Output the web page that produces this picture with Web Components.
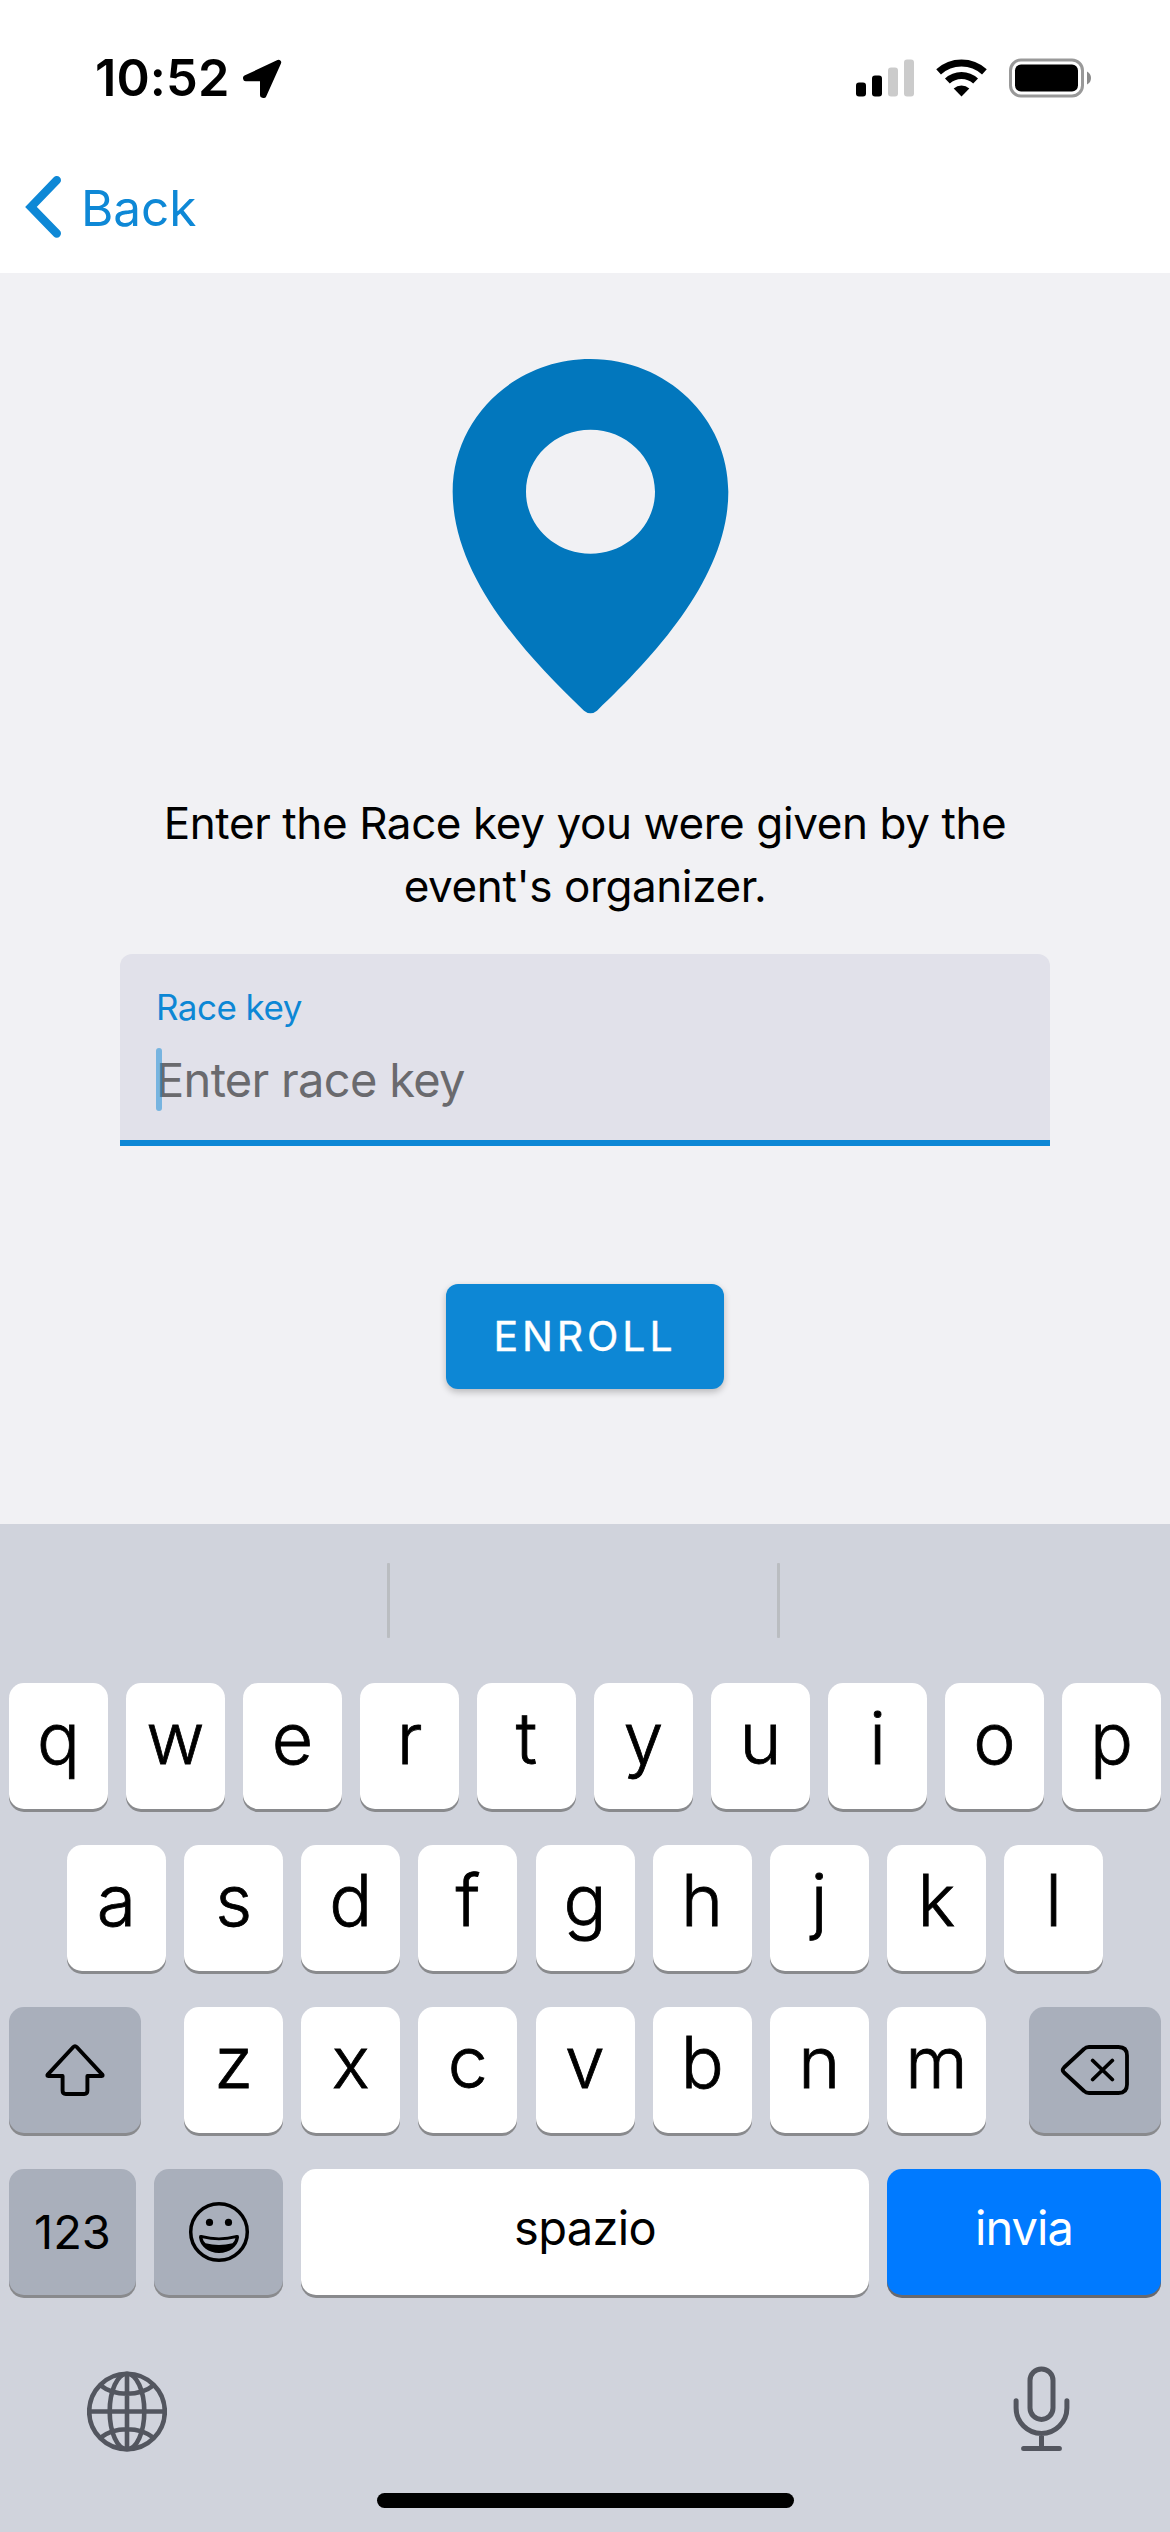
<!DOCTYPE html>
<html lang="it">
<head>
<meta charset="utf-8">
<title>Enroll</title>
<style>
  html, body { margin: 0; padding: 0; background: #f1f1f4; }
  body { font-family: Inter, "Liberation Sans", sans-serif; color: #000; }
</style>
</head>
<body>
<enroll-screen></enroll-screen>
<script>
const define = (name, html) => {
  const template = document.createElement('template');
  template.innerHTML = html;
  customElements.define(name, class extends HTMLElement {
    constructor() {
      super();
      this.attachShadow({ mode: 'open' }).append(template.content.cloneNode(true));
    }
  });
};

define('status-bar', `
<style>
  :host { display: flex; justify-content: space-between; align-items: center; height: 131px; padding: 12px 79px 0 95px; box-sizing: content-box; }
  .left, .right { display: flex; align-items: center; }
  .time { font-size: 50.5px; font-weight: 600; letter-spacing: .1px; line-height: 60px; }
  svg { display: block; }
  .loc { margin-left: 12px; margin-top: 2px; }
  .wifi { margin-left: 22px; }
  .bat { margin-left: 22px; }
</style>
<div class="left">
  <span class="time">10:52</span>
  <svg class="loc" width="40" height="40" viewBox="0 0 40 40"><path d="M3.600 18.900 36.600 3.400 21.800 36.400 20.600 36.200V19.700L3.700 19.600Z" stroke="#000" stroke-width="5.200" stroke-linejoin="round"/></svg>
</div>
<div class="right">
  <svg width="58" height="38" viewBox="0 0 58 38"><g><rect y="23.5" width="10" height="14" rx="3"/><rect x="16" y="16.5" width="10" height="21" rx="3"/></g><g fill="#cbcbcb"><rect x="32" y="8.5" width="10" height="29" rx="3"/><rect x="48" y=".5" width="10" height="37" rx="3"/></g></svg>
  <svg class="wifi" width="51" height="38" viewBox="0 0 51 38">
    <g stroke="#000" fill="none"><path d="M2.6 12.8A34 34 0 0 1 48.4 12.8" stroke-width="7"/><path d="M11.4 22A20.5 20.5 0 0 1 39.6 22" stroke-width="7"/></g>
    <path d="M25.5 37.5 17.7 29.6A11.5 11.5 0 0 1 33.3 29.6Z"/>
  </svg>
  <svg class="bat" width="82" height="40" viewBox="0 0 82 40"><rect x="1.5" y="2" width="72" height="36" rx="10.5" fill="none" stroke="#999" stroke-width="3"/><rect x="6" y="6.5" width="63" height="27" rx="6"/><path d="M78 13.5Q82 15.5 82 20T78 26.5Z" fill="#8a8a8a"/></svg>
</div>`);

define('nav-bar', `
<style>
  :host { display: flex; align-items: center; height: 130px; padding-left: 24px; color: #0e88d6; }
  svg { display: block; margin-right: 19px; }
  span { font-size: 49.5px; line-height: 60px; letter-spacing: -.1px; }
</style>
<svg width="38" height="64" viewBox="0 0 38 64"><path d="M32.800 4.200 7 30.900 32.800 57.500" fill="none" stroke="currentColor" stroke-width="8.400" stroke-linecap="round" stroke-linejoin="miter"/></svg>
<span><slot></slot></span>`);

define('place-pin', `
<style>:host { display: block; width: 320px; height: 390px; } svg { display: block; }</style>
<svg width="320" height="390" viewBox="0 0 960 1170"><path fill="#0277bd" fill-rule="evenodd" d="M481.500 57C253 57 68 235 68 455C68 700 270 930 462 1112Q481.500 1128 501 1112C693 930 895 700 895 455C895 235 710 57 481.500 57ZM481.500 269C588 269 675 352 675 455S588 641 481.500 641 288 558 288 455 375 269 481.500 269Z"/></svg>`);

define('text-field', `
<style>
  :host { display: flex; flex-direction: column; box-sizing: border-box; width: 930px; height: 192px; padding: 33px 36px 0; background: #e1e1ea; border-bottom: 6px solid #0d87d5; border-radius: 12px 12px 0 0; }
  .label { font-size: 35px; line-height: 40px; letter-spacing: -.53px; color: #0d87d5; }
  .line { position: relative; display: flex; align-items: center; height: 64px; margin-top: 21px; }
  .hint { font-size: 47px; line-height: 64px; letter-spacing: -.69px; color: #6a6a6e; }
  .caret { position: absolute; left: 0; top: 0; width: 6px; height: 63px; border-radius: 3px; background: #0d87d5; opacity: .5; }
</style>
<span class="label"><slot name="label"></slot></span>
<div class="line"><span class="hint"><slot></slot></span><span class="caret"></span></div>`);

define('raised-button', `
<style>
  :host { display: flex; align-items: center; justify-content: center; width: 278px; height: 105px; border-radius: 12px; background: #0d87d5; color: #fff; box-shadow: 0 3px 7px rgba(0,0,0,.24); }
  span { font-size: 41px; font-weight: 400; -webkit-text-stroke: .4px currentColor; line-height: 50px; letter-spacing: 3.9px; margin-top: -1px; }
</style>
<span><slot></slot></span>`);

define('key-cap', `
<style>
  :host { display: flex; align-items: center; justify-content: center; box-sizing: border-box; width: 99px; height: 126px; padding-bottom: 17px; border-radius: 15px; background: #fff; box-shadow: 0 3px 0 #898a8d; font-size: 71.5px; font-weight: 300; -webkit-text-stroke: .8px currentColor; }
  :host([kind]) { font-size: 47px; font-weight: 400; -webkit-text-stroke: 0; }
  :host([kind="fn"]) { background: #a9afbb; padding-bottom: 0; }
  :host([kind="space"]) { width: 568px; letter-spacing: -.68px; padding-bottom: 9px; }
  :host([kind="go"]) { width: 274px; letter-spacing: -.95px; background: #007aff; color: #fff; padding-bottom: 9px; box-shadow: 0 3px 0 #68696e; }
</style>
<slot></slot>`);

define('suggestion-bar', `
<style>
  :host { display: flex; justify-content: center; gap: 387px; height: 75px; padding: 39px 3px 45px 0; }
  i { width: 3px; height: 75px; border-radius: 1px; background: #babdc1; }
</style><i></i><i></i>`);

define('soft-keyboard', `
<style>
  :host { display: flex; flex-direction: column; height: 1008px; background: #d0d3dc; }
  .rows { display: flex; flex-direction: column; gap: 36px; padding: 0 9px; }
  .row { display: flex; justify-content: center; gap: 18px; }
  .row.home-row { justify-content: space-between; padding: 0 58px; }
  .row.split { justify-content: space-between; }
  .mid { display: flex; gap: 18.170px; }
  .wide { width: 132px; } .num { width: 127px; padding-bottom: 1px; } .emoji { width: 129px; }
  svg { display: block; }
  .tools { display: flex; justify-content: space-between; align-items: flex-start; padding: 71px 100px 0 87px; color: #53565f; }
  .tools svg:first-child { margin-top: 5px; }
  .home { width: 417px; height: 15px; border-radius: 7.500px; background: #000; margin: auto auto 24px; }
</style>
<suggestion-bar></suggestion-bar>
<div class="rows">
  <div class="row"><key-cap>q</key-cap><key-cap>w</key-cap><key-cap>e</key-cap><key-cap>r</key-cap><key-cap>t</key-cap><key-cap>y</key-cap><key-cap>u</key-cap><key-cap>i</key-cap><key-cap>o</key-cap><key-cap>p</key-cap></div>
  <div class="row home-row"><key-cap>a</key-cap><key-cap>s</key-cap><key-cap>d</key-cap><key-cap>f</key-cap><key-cap>g</key-cap><key-cap>h</key-cap><key-cap>j</key-cap><key-cap>k</key-cap><key-cap>l</key-cap></div>
  <div class="row split">
    <key-cap kind="fn" class="wide"><svg width="60" height="54" viewBox="45.600 63 60 54"><path d="M73.900 67 48.500 94.300Q47.200 96 49 96H63.200V110.800Q63.200 114 66.400 114H84.800Q88 114 88 110.800V96H102.200Q104 96 102.700 94.300L77.300 67Q75.600 65.200 73.900 67Z" fill="none" stroke="#000" stroke-width="3.900" stroke-linejoin="round"/></svg></key-cap>
    <div class="mid"><key-cap>z</key-cap><key-cap>x</key-cap><key-cap>c</key-cap><key-cap>v</key-cap><key-cap>b</key-cap><key-cap>n</key-cap><key-cap>m</key-cap></div>
    <key-cap kind="fn" class="wide"><svg width="70" height="52" viewBox="479 64 70 52"><path d="M508 67H537.500Q546 67 546 75.500V104.500Q546 113 537.500 113H508Q505 113 503 111L483 92.500Q480.500 90 483 87.500L503 69Q505 67 508 67ZM511.700 80.500 531.300 99.500M531.300 80.500 511.700 99.500" fill="none" stroke="#000" stroke-width="3.800" stroke-linecap="round" stroke-linejoin="round"/></svg></key-cap>
  </div>
  <div class="row">
    <key-cap kind="fn" class="num">123</key-cap>
    <key-cap kind="fn" class="emoji"><svg width="62" height="62" viewBox="187 221 62 62"><circle cx="218" cy="252" r="28.300" fill="none" stroke="#000" stroke-width="3.500"/><circle cx="208.500" cy="242.400" r="3.600"/><circle cx="227.500" cy="242.400" r="3.600"/><path d="M200.400 255.100Q218 259.800 235.600 255.100 238.300 254.600 238 257.500C236.500 267 228.500 272.900 218 272.900S199.500 267 198 257.500Q197.700 254.600 200.400 255.100Z"/><path d="M201.600 258.300Q218 262.200 234.400 258.300 233.800 261.500 231.500 263.200 218 266.800 204.500 263.200 202.200 261.500 201.600 258.300Z" fill="#a9afbb"/></svg></key-cap>
    <key-cap kind="space">spazio</key-cap>
    <key-cap kind="go">invia</key-cap>
  </div>
</div>
<div class="tools">
  <svg width="80" height="81" viewBox="0 0 80 81"><g transform="translate(40 40.500)" fill="none" stroke="currentColor" stroke-width="4.600"><circle r="37.800"/><ellipse rx="17.300" ry="37.800"/><path d="M0-38V38M-38 0H38M-27-26.500Q-16-17.700 0-17.700T27-26.500M-27 26.500Q-16 17.700 0 17.700T27 26.500"/></g></svg>
  <svg width="57" height="86" viewBox="433.300 46 57 86"><g fill="none" stroke="currentColor" stroke-width="5" stroke-linecap="round"><rect x="450.300" y="48.900" width="23" height="50.500" rx="11.500"/><path d="M436.400 80.800V88A25.400 25.400 0 0 0 487.200 88V80.800M461.800 113.500V128M443.900 128.500H479.700"/></g></svg>
</div>
<div class="home"></div>`);

define('enroll-screen', `
<style>
  :host { display: flex; flex-direction: column; width: 1170px; height: 2532px; overflow: hidden; background: #f1f1f4; }
  header { background: #fff; height: 273px; }
  main { display: flex; flex-direction: column; align-items: center; height: 1251px; }
  place-pin { margin: 67px 0 0 10px; }
  p { margin: 61.500px 0 36.500px; width: 900px; text-align: center; font-size: 44px; line-height: 63px; letter-spacing: -.4px; }
  raised-button { margin-top: 138px; }
</style>
<header><status-bar></status-bar><nav-bar>Back</nav-bar></header>
<main>
  <place-pin></place-pin>
  <p>Enter the Race key you were given by the event's organizer.</p>
  <text-field><span slot="label">Race key</span>Enter race key</text-field>
  <raised-button>ENROLL</raised-button>
</main>
<soft-keyboard></soft-keyboard>`);
</script>
</body>
</html>
